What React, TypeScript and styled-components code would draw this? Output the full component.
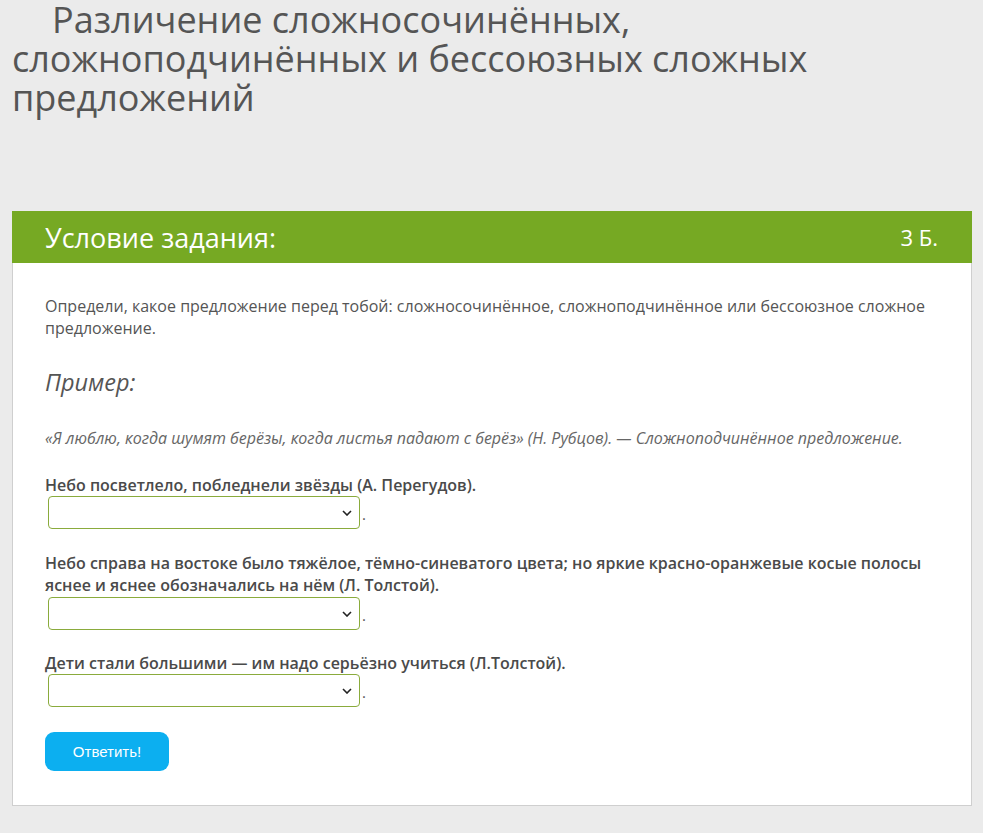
import React from 'react'
import styled, { createGlobalStyle } from 'styled-components'

const GlobalStyle = createGlobalStyle`
	html, body {
		margin: 0;
		padding: 0;
		background: #ebebeb;
	}
	body {
		font-family: 'Open Sans', 'Noto Sans', sans-serif;
		color: #555;
	}
`

const Page = styled.div`
	padding-bottom: 28px;
`

const Title = styled.h1`
	margin: 0;
	padding: 0 12px;
	font-size: 36px;
	line-height: 39px;
	font-weight: 400;
	color: #555;
	text-indent: 40px;
`

const Card = styled.section`
	margin: 94px 11px 0 12px;
	background: #fff;
	border: 1px solid #cfcfcf;
	border-top: none;
`

const CardHeader = styled.header`
	display: flex;
	justify-content: space-between;
	align-items: center;
	height: 52px;
	margin: 0 -1px;
	padding: 0 34px 0 33px;
	background: #76a923;
	color: #fff;
	font-size: 27px;
`

const Points = styled.span`
	font-size: 22px;
`

const CardBody = styled.div`
	padding: 32px 32px 34px 32px;
`

const Text = styled.p`
	margin: 0;
	font-size: 16px;
	line-height: 22px;
	color: #555;
`

const ExampleTitle = styled.h3`
	margin: 29px 0 0;
	font-size: 23.5px;
	line-height: 29px;
	font-weight: 400;
	font-style: italic;
	color: #555;
`

const ExampleText = styled.p`
	margin: 30px 0 0;
	font-size: 16px;
	line-height: 22px;
	font-style: italic;
	color: #666;
`

const Question = styled.div<{ gap: number }>`
	margin-top: ${p => p.gap}px;
`

const QuestionText = styled.div`
	font-size: 16px;
	line-height: 22px;
	font-weight: 600;
	color: #4a4a4a;
`

const AnswerRow = styled.div<{ offset: number }>`
	display: flex;
	align-items: flex-end;
	margin-top: ${p => p.offset}px;
	padding-left: 3px;
	color: #555;
	font-size: 15px;
	line-height: 18px;
`

const Dot = styled.span`
	padding-bottom: 6px;
`

const Select = styled.select`
	appearance: none;
	width: 312px;
	height: 33px;
	margin-right: 2px;
	border: 1px solid #8aab3c;
	border-radius: 4px;
	background: #fff
		url("data:image/svg+xml;utf8,<svg xmlns='http://www.w3.org/2000/svg' width='10' height='6' viewBox='0 0 10 6'><path d='M1 1l4 4 4-4' fill='none' stroke='%23222' stroke-width='1.6'/></svg>")
		no-repeat right 7px center;
	font-family: 'Open Sans', sans-serif;
	font-size: 14px;
`

const SubmitButton = styled.button`
	display: block;
	margin-top: 25px;
	width: 124px;
	height: 39px;
	border: none;
	border-radius: 9px;
	background: #0caff0;
	color: #fff;
	font-family: 'Liberation Sans', Arial, sans-serif;
	font-size: 15px;
	cursor: pointer;
`

const questions = [
	{
		text: 'Небо посветлело, побледнели звёзды (А. Перегудов).',
		gap: 25,
		offset: 0,
	},
	{
		text: 'Небо справа на востоке было тяжёлое, тёмно-синеватого цвета; но яркие красно-оранжевые косые полосы яснее и яснее обозначались на нём (Л. Толстой).',
		gap: 23,
		offset: 1,
	},
	{
		text: 'Дети стали большими — им надо серьёзно учиться (Л.Толстой).',
		gap: 22,
		offset: 0,
	},
]

export default function App() {
	return (
		<Page>
			<GlobalStyle />
			<Title>
				Различение сложносочинённых, сложноподчинённых и бессоюзных сложных
				предложений
			</Title>
			<Card>
				<CardHeader>
					<span>Условие задания:</span>
					<Points>3 Б.</Points>
				</CardHeader>
				<CardBody>
					<Text>
						Определи, какое предложение перед тобой: сложносочинённое,
						сложноподчинённое или бессоюзное сложное предложение.
					</Text>
					<ExampleTitle>Пример:</ExampleTitle>
					<ExampleText>
						«Я люблю, когда шумят берёзы, когда листья падают с берёз» (Н.
						Рубцов). — Сложноподчинённое предложение.
					</ExampleText>
					{questions.map((q, idx) => (
						<Question key={idx} gap={q.gap}>
							<QuestionText>{q.text}</QuestionText>
							<AnswerRow offset={q.offset}>
								<Select defaultValue="">
									<option value=""></option>
									<option>сложносочинённое</option>
									<option>сложноподчинённое</option>
									<option>бессоюзное сложное</option>
								</Select>
								<Dot>.</Dot>
							</AnswerRow>
						</Question>
					))}
					<SubmitButton>Ответить!</SubmitButton>
				</CardBody>
			</Card>
		</Page>
	)
}
